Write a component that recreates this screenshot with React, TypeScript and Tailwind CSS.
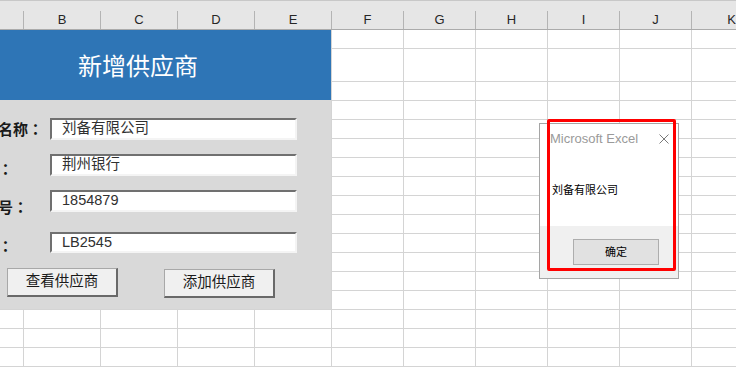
const cols: { w: number; label: string }[] = [
  { w: 24, label: "" },
  { w: 77, label: "B" },
  { w: 77, label: "C" },
  { w: 77, label: "D" },
  { w: 77, label: "E" },
  { w: 72, label: "F" },
  { w: 72, label: "G" },
  { w: 72, label: "H" },
  { w: 72, label: "I" },
  { w: 72, label: "J" },
  { w: 80, label: "K" },
]

const rowHeights = [19, 33, ...Array(15).fill(19)]

const fields = [
  { label: "供应商名称", value: "刘备有限公司", gap: "mt-0", labelOffset: "translate-y-0", h: "h-[22px]" },
  { label: "开户行", value: "荆州银行", gap: "mt-[14px]", labelOffset: "translate-y-[4px]", h: "h-[22px]" },
  { label: "银行账号", value: "1854879", gap: "mt-[14px]", labelOffset: "translate-y-[6px]", h: "h-[22px]" },
  { label: "编码号", value: "LB2545", gap: "mt-[20px]", labelOffset: "translate-y-[3px]", h: "h-[21px]" },
]

function SheetHeader() {
  return (
    <div className="flex h-[30px] border-t border-b border-[#c8c8c8] border-b-[#ababab] bg-[#e6e6e6]">
      {cols.map((c, i) => (
        <div key={i} className="flex shrink-0 items-end" style={{ width: c.w }}>
          <div className="flex h-[18px] w-full items-center justify-center border-r border-[#b4b4b4] text-[13px] text-[#262626]">
            {c.label}
          </div>
        </div>
      ))}
    </div>
  )
}

function SheetGrid() {
  return (
    <div className="flex flex-col">
      {rowHeights.map((h, r) => (
        <div key={r} className="flex shrink-0" style={{ height: h }}>
          {cols.map((c, i) => (
            <div key={i} className="shrink-0 border-r border-b border-[#d4d4d4]" style={{ width: c.w }} />
          ))}
        </div>
      ))}
    </div>
  )
}

function SupplierForm() {
  return (
    <div className="absolute left-[-55px] top-[30px] flex h-[279px] w-[386px] flex-col">
      <div className="flex h-[70px] shrink-0 items-center justify-center bg-[#2e75b6] pt-[4px] text-[24px] text-white">
        新增供应商
      </div>
      <div className="flex flex-1 flex-col bg-[#d9d9d9] pt-[18px]">
        {fields.map((f) => (
          <div key={f.label} className={`flex items-start ${f.gap} ${f.h}`}>
            <div className={`w-[105px] shrink-0 whitespace-nowrap pl-[8px] text-[15px] font-bold leading-[22px] text-[#1a1a1a] ${f.labelOffset}`}>
              {f.label}
              <span style={{ fontFamily: "'Noto Sans CJK TC', sans-serif" }}>：</span>
            </div>
            <div className={`flex w-[247px] items-center border-2 border-t-[#707070] border-l-[#707070] border-r-[#f4f4f4] border-b-[#f4f4f4] bg-white pl-[10px] text-[14.5px] text-[#303030] ${f.h}`}>
              {f.value}
            </div>
          </div>
        ))}
        <div className="mt-[15px] flex items-start pl-[62px]">
          <button className="flex h-[29px] w-[111px] items-center justify-center border-t border-l border-[#a8a8a8] border-r-2 border-b-2 border-r-[#696969] border-b-[#696969] bg-[#f0f0f0] text-[14.5px] text-[#1a1a1a]">
            查看供应商
          </button>
          <button className="ml-[46px] mt-[1px] flex h-[29px] w-[111px] items-center justify-center border-t border-l border-[#a8a8a8] border-r-2 border-b-2 border-r-[#696969] border-b-[#696969] bg-[#f0f0f0] text-[14.5px] text-[#1a1a1a]">
            添加供应商
          </button>
        </div>
      </div>
    </div>
  )
}

function MessageBox() {
  return (
    <>
      <div className="absolute left-[539px] top-[123px] flex h-[156px] w-[140px] flex-col border border-[#a5a5a5] bg-white">
        <div className="flex h-[102px] flex-col">
          <div className="flex h-[30px] items-center justify-between pl-[10px] pr-[9px]">
            <span className="text-[13px] text-[#9a9a9a]">Microsoft Excel</span>
            <svg width="10" height="10" viewBox="0 0 10 10" className="text-[#7a7a7a]">
              <path d="M0.5 0.5 L9.5 9.5 M9.5 0.5 L0.5 9.5" stroke="currentColor" strokeWidth="1" fill="none" />
            </svg>
          </div>
          <div className="mt-[28px] pl-[12px] text-[11px] leading-[16px] text-black">刘备有限公司</div>
        </div>
        <div className="flex-1 bg-[#f0f0f0] pl-[33px] pt-[13px]">
          <div className="flex h-[26px] w-[86px] items-center justify-center border border-[#adadad] bg-[#e1e1e1] text-[11px] text-black">
            确定
          </div>
        </div>
      </div>
      <div className="absolute left-[547px] top-[119px] h-[152px] w-[129px] rounded-[2px] border-[3px] border-[#ff0000]" />
    </>
  )
}

export default function App() {
  return (
    <div
      className="relative h-[374px] w-[736px] overflow-hidden bg-white"
      style={{ fontFamily: "'Liberation Sans', 'Noto Sans CJK SC', sans-serif" }}
    >
      <SheetHeader />
      <SheetGrid />
      <SupplierForm />
      <MessageBox />
    </div>
  )
}
